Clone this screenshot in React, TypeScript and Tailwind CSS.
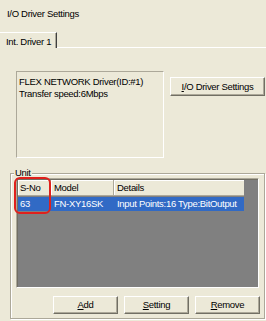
import React from "react";

const font = { fontFamily: '"Liberation Sans", Arial, sans-serif' };

function Btn({ children, className = "" }: { children: React.ReactNode; className?: string }) {
  return (
    <div
      className={`flex items-center justify-center h-[18px] bg-[#ECE9D8] border border-t-white border-l-white border-r-[#716F64] border-b-[#716F64] shadow-[inset_-1px_-1px_0_#ACA899] text-black ${className}`}
    >
      {children}
    </div>
  );
}

export default function App() {
  return (
    <div style={font} className="w-[266px] h-[321px] bg-[#ECE9D8] overflow-hidden text-[9.5px] tracking-[-0.3px] leading-[12px] text-black flex flex-col whitespace-nowrap">
      <div className="pl-[7px] pt-[8px] h-[20px]">I/O Driver Settings</div>
      <div className="mt-[12px] flex items-end h-[16px]">
        <div className="h-[16px] w-[57px] border-t border-white border-r border-r-[#404040] shadow-[inset_-1px_0_0_#ACA899] pl-[6px] pt-[3px]">
          Int. Driver 1
        </div>
        <div className="flex-1 border-b border-white" />
      </div>
      <div className="flex items-start pl-[16px] mt-[23px]">
        <div className="w-[148px] h-[87px] border border-t-[#ACA899] border-l-[#ACA899] border-r-white border-b-white pl-[2px] pt-[4px] leading-[12px]">
          <div>FLEX NETWORK Driver(ID:#1)</div>
          <div>Transfer speed:6Mbps</div>
        </div>
        <Btn className="ml-[6px] mt-[6px] w-[95px] h-[19px]">
          <span><span className="underline">I</span>/O Driver Settings</span>
        </Btn>
      </div>
      <div className="relative ml-[10px] mt-[15px] w-[255px] h-[146px] border border-[#ACA899] shadow-[inset_1px_1px_0_#fff,1px_1px_0_#fff] pl-[5px] pt-[4px] pr-[4px] flex flex-col">
        <div className="absolute top-[-7px] left-[3px] px-[1px] bg-[#ECE9D8] leading-[12px]">Unit</div>
        <div className="relative w-[243px] h-[110px] bg-[#808080] border border-t-[#ACA899] border-l-[#ACA899] border-r-white border-b-white shadow-[inset_1px_1px_0_#716F64]">
          <div className="flex pt-[1px] pl-[1px]">
            <div className="w-[33px] h-[16px] bg-[#ECE9D8] border-r border-b border-r-[#ACA899] border-b-[#ACA899] shadow-[inset_1px_1px_0_#fff] pl-[2px] pt-[2px]">S-No</div>
            <div className="w-[63px] h-[16px] bg-[#ECE9D8] border-r border-b border-r-[#ACA899] border-b-[#ACA899] shadow-[inset_1px_1px_0_#fff] pl-[3px] pt-[2px]">Model</div>
            <div className="w-[130px] h-[16px] bg-[#ECE9D8] border-b border-b-[#ACA899] shadow-[inset_1px_1px_0_#fff] pl-[3px] pt-[2px]">Details</div>
          </div>
          <div className="flex pl-[1px] h-[14px] mt-[1px]">
            <div className="flex w-[226px] bg-[#316AC5] text-white pt-[1px]">
              <div className="w-[33px] pl-[2px]">63</div>
              <div className="w-[63px] pl-[3px]">FN-XY16SK</div>
              <div className="pl-[3px]">Input Points:16 Type:BitOutput</div>
            </div>
          </div>
          <div className="absolute left-[-3px] top-[-2px] w-[37px] h-[37px] border-2 border-[#E0201C] rounded-[6px]" />
        </div>
        <div className="flex justify-end mt-[8px] gap-[6px]">
          <Btn className="w-[65px]"><span><span className="underline">A</span>dd</span></Btn>
          <Btn className="w-[65px]"><span><span className="underline">S</span>etting</span></Btn>
          <Btn className="w-[65px]"><span><span className="underline">R</span>emove</span></Btn>
        </div>
      </div>
    </div>
  );
}
